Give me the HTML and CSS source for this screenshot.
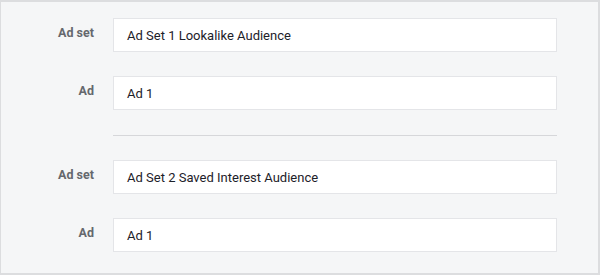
FILE: index.html
```html
<!DOCTYPE html>
<html>
<head>
<meta charset="utf-8">
<link rel="stylesheet" href="styles.css">
</head>
<body>
<div class="frame">
  <div class="group">
    <div class="row">
      <div class="label">Ad set</div>
      <div class="field">Ad Set 1 Lookalike Audience</div>
    </div>
    <div class="row">
      <div class="label">Ad</div>
      <div class="field">Ad 1</div>
    </div>
  </div>
  <div class="sep-row"><div class="sep"></div></div>
  <div class="group">
    <div class="row">
      <div class="label">Ad set</div>
      <div class="field">Ad Set 2 Saved Interest Audience</div>
    </div>
    <div class="row">
      <div class="label">Ad</div>
      <div class="field">Ad 1</div>
    </div>
  </div>
</div>
</body>
</html>
```
FILE: styles.css
```css
html, body {
  margin: 0;
  padding: 0;
}
body {
  width: 600px;
  height: 275px;
  font-family: Roboto, "Liberation Sans", sans-serif;
}
.frame {
  box-sizing: border-box;
  width: 600px;
  height: 275px;
  background: #f5f6f7;
  border-style: solid;
  border-color: #dcdddf;
  border-width: 2px 2px 2px 1px;
  padding: 16px 41px 21px 0;
  display: flex;
  flex-direction: column;
}
.group {
  display: flex;
  flex-direction: column;
  gap: 24px;
}
.row {
  display: grid;
  grid-template-columns: 93px 1fr;
  column-gap: 19px;
  align-items: start;
}
.label {
  text-align: right;
  font-size: 12.5px;
  font-weight: 700;
  color: #65686d;
  padding-top: 7px;
  line-height: 16px;
}
.field {
  box-sizing: border-box;
  height: 34px;
  background: #fff;
  border: 1px solid #e4e5e8;
  padding: 0 13px;
  display: flex;
  align-items: center;
  font-size: 13px;
  color: #1d2129;
}
.sep-row {
  padding: 25px 0 24px 112px;
}
.sep {
  height: 1px;
  background: #d6d7da;
}
```
